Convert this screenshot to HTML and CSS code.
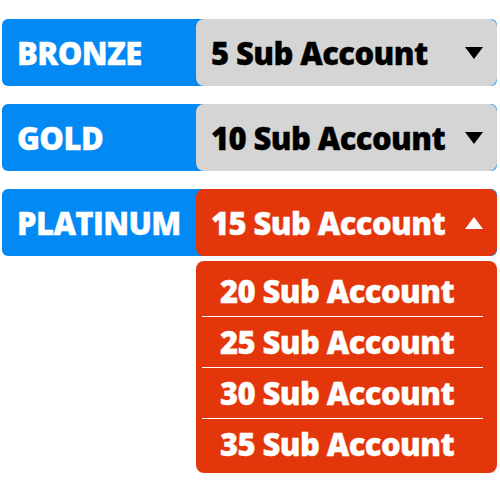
FILE: index.html
```html
<!DOCTYPE html>
<html lang="en">
<head>
  <meta charset="UTF-8" />
  <title>Plans</title>
  <link rel="stylesheet" href="styles.css">
</head>
<body>
  <div class="plans">
    <div class="plan">
      <span class="plan-name">BRONZE</span>
      <div class="select">
        <span>5 Sub Account</span>
        <span class="caret"></span>
      </div>
    </div>
    <div class="plan">
      <span class="plan-name">GOLD</span>
      <div class="select">
        <span>10 Sub Account</span>
        <span class="caret"></span>
      </div>
    </div>
    <div class="plan-group">
      <div class="plan open">
        <span class="plan-name">PLATINUM</span>
        <div class="select">
          <span>15 Sub Account</span>
          <span class="caret"></span>
        </div>
      </div>
      <ul class="options">
        <li>20 Sub Account</li>
        <li>25 Sub Account</li>
        <li>30 Sub Account</li>
        <li>35 Sub Account</li>
      </ul>
    </div>
  </div>
</body>
</html>
```

FILE: styles.css
```css
html, body {
  margin: 0;
  padding: 0;
  background: white;
  font-family: 'Open Sans', sans-serif;
  font-weight: 800;
  -webkit-text-stroke: 0.3px currentColor;
}
.plans {
  display: flex;
  flex-direction: column;
  gap: 18px;
  padding: 19px 3px 0 2px;
}
.plan-group {
  display: flex;
  flex-direction: column;
  gap: 5px;
}
.plan {
  display: flex;
  height: 67px;
  background: #0289f4;
  border-radius: 6px;
}
.plan-name {
  flex: 1;
  display: flex;
  align-items: center;
  padding-left: 15px;
  color: white;
  font-size: 31px;
  letter-spacing: -0.6px;
}
.select {
  width: 301px;
  display: flex;
  align-items: center;
  justify-content: space-between;
  padding: 0 14px 0 15px;
  box-sizing: border-box;
  background: #d5d5d5;
  border-radius: 8px;
  color: black;
  font-size: 31px;
  letter-spacing: -0.6px;
}
.caret {
  width: 0;
  height: 0;
  border-left: 9.5px solid transparent;
  border-right: 9.5px solid transparent;
  border-top: 12px solid black;
}
.open .select {
  background: #e4360b;
  color: white;
}
.open .caret {
  border-top: 0;
  border-bottom: 12px solid white;
}
.options {
  align-self: flex-end;
  width: 301px;
  box-sizing: border-box;
  margin: 0;
  padding: 5px 14px 4px 6px;
  list-style: none;
  background: #e4360b;
  border-radius: 8px;
  color: white;
  font-size: 31px;
  letter-spacing: -0.6px;
}
.options li {
  height: 50px;
  display: flex;
  align-items: center;
  padding-left: 18px;
  border-bottom: 1px solid white;
}
.options li:last-child {
  border-bottom: 0;
}
```
